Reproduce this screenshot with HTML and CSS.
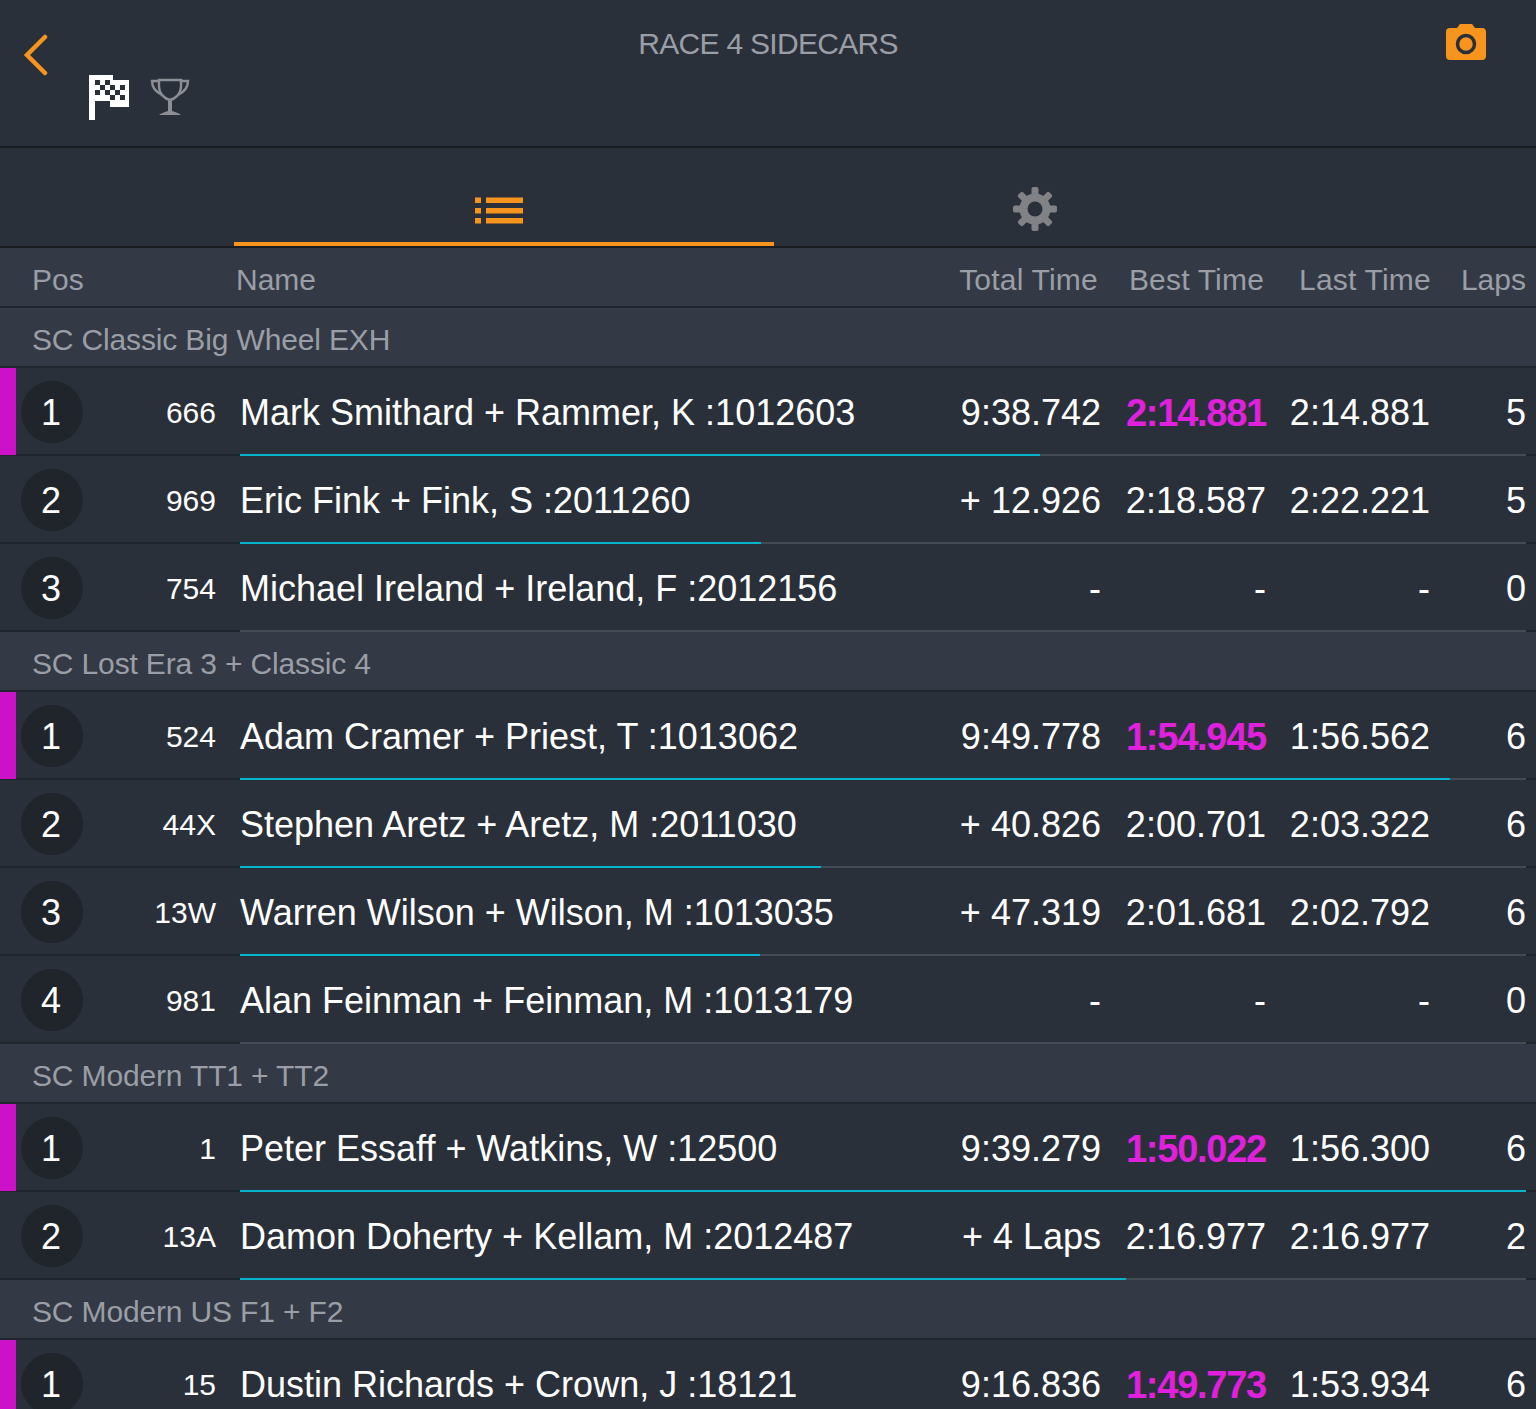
FILE: index.html
```html
<!DOCTYPE html>
<html lang="en">
<head>
    <meta charset="UTF-8">
    <meta name="viewport" content="width=device-width, initial-scale=1.0">
    <title>Race 4 Sidecars</title>
    <link rel="stylesheet" href="styles.css">
</head>
<body>
    <header class="top-bar">
        <svg class="back-icon" width="26" height="42" viewBox="0 0 26 42"><path d="M22 3 L4 21 L22 39" fill="none" stroke="#f7941d" stroke-width="4.5" stroke-linecap="round"/></svg>
        <div class="top-middle">
            <h1 class="race-title">RACE 4 SIDECARS</h1>
        </div>
        <svg class="camera-icon" width="40" height="36" viewBox="0 0 40 36"><path d="M4 4 H11 L14 0 H26 L29 4 H36 Q40 4 40 8 V32 Q40 36 36 36 H4 Q0 36 0 32 V8 Q0 4 4 4 Z" fill="#f7941d"/><circle cx="20" cy="20" r="8.5" fill="none" stroke="#2a303a" stroke-width="3.5"/></svg>
        <div class="race-icons">
            <svg width="41" height="45" viewBox="0 0 41 45">
                <path d="M0 0 H24 V5 H40 V32 H21 V26 H6 V45 H0 Z" fill="#fff"/>
                <g fill="#2a303a">
                    <rect x="6" y="5" width="5" height="5"/><rect x="16" y="5" width="5" height="5"/>
                    <rect x="11" y="10" width="5" height="5"/><rect x="21" y="10" width="5" height="5"/><rect x="31" y="10" width="5" height="5"/>
                    <rect x="6" y="15" width="5" height="5"/><rect x="16" y="15" width="5" height="5"/><rect x="26" y="15" width="5" height="5"/>
                    <rect x="21" y="20" width="5" height="5"/><rect x="31" y="20" width="5" height="5"/>
                </g>
            </svg>
            <svg width="40" height="38" viewBox="0 0 40 38">
                <g fill="none" stroke="#8b8f95" stroke-width="2.4">
                    <path d="M9 2 H31 V8 C31 16 25 21 20 22 C15 21 9 16 9 8 Z"/>
                    <path d="M9 3 H2 C2 10 6 14 12 17"/>
                    <path d="M31 3 H38 C38 10 34 14 28 17"/>
                </g>
                <path d="M18 22 H22 V33 C25 34 29 35 31 37 H9 C11 35 15 34 18 33 Z" fill="#8b8f95"/>
            </svg>
        </div>
    </header>

    <nav class="tabs">
        <div class="tab tab-active">
            <svg width="48" height="28" viewBox="0 0 48 28" fill="#f7941d">
                <rect x="0" y="0.5" width="6" height="5.5"/><rect x="11" y="0.5" width="37" height="5.5"/>
                <rect x="0" y="11" width="6" height="5.5"/><rect x="11" y="11" width="37" height="5.5"/>
                <rect x="0" y="21" width="6" height="5.5"/><rect x="11" y="21" width="37" height="5.5"/>
            </svg>
        </div>
        <div class="tab tab-gear">
            <svg width="44" height="44" viewBox="0 0 44 44">
                <g fill="#808285">
                    <rect x="18.5" y="0" width="7" height="44" rx="2"/>
                    <rect x="18.5" y="0" width="7" height="44" rx="2" transform="rotate(45 22 22)"/>
                    <rect x="18.5" y="0" width="7" height="44" rx="2" transform="rotate(90 22 22)"/>
                    <rect x="18.5" y="0" width="7" height="44" rx="2" transform="rotate(135 22 22)"/>
                    <circle cx="22" cy="22" r="15.5"/>
                </g>
                <circle cx="22" cy="22" r="7.5" fill="#2a303a"/>
            </svg>
        </div>
    </nav>

    <div class="head-row">
        <span class="head-pos">Pos</span>
        <span class="head-name">Name</span>
        <span class="head-total">Total Time</span>
        <span class="head-best">Best Time</span>
        <span class="head-last">Last Time</span>
        <span class="head-laps">Laps</span>
    </div>

    <div class="group-row">SC Classic Big Wheel EXH</div>

    <div class="row leader">
        <span class="accent"></span><span class="pos">1</span><span class="num">666</span>
        <span class="name">Mark Smithard + Rammer, K :1012603</span>
        <span class="time">9:38.742</span><span class="time best">2:14.881</span><span class="time">2:14.881</span><span class="time">5</span>
        <div class="track"><div class="fill" style="width: 62.2%"></div></div>
    </div>
    <div class="row">
        <span class="accent"></span><span class="pos">2</span><span class="num">969</span>
        <span class="name">Eric Fink + Fink, S :2011260</span>
        <span class="time">+ 12.926</span><span class="time">2:18.587</span><span class="time">2:22.221</span><span class="time">5</span>
        <div class="track"><div class="fill" style="width: 40.5%"></div></div>
    </div>
    <div class="row">
        <span class="accent"></span><span class="pos">3</span><span class="num">754</span>
        <span class="name">Michael Ireland + Ireland, F :2012156</span>
        <span class="time">-</span><span class="time">-</span><span class="time">-</span><span class="time">0</span>
        <div class="track"></div>
    </div>

    <div class="group-row">SC Lost Era 3 + Classic 4</div>

    <div class="row leader">
        <span class="accent"></span><span class="pos">1</span><span class="num">524</span>
        <span class="name">Adam Cramer + Priest, T :1013062</span>
        <span class="time">9:49.778</span><span class="time best">1:54.945</span><span class="time">1:56.562</span><span class="time">6</span>
        <div class="track"><div class="fill" style="width: 94.1%"></div></div>
    </div>
    <div class="row">
        <span class="accent"></span><span class="pos">2</span><span class="num">44X</span>
        <span class="name">Stephen Aretz + Aretz, M :2011030</span>
        <span class="time">+ 40.826</span><span class="time">2:00.701</span><span class="time">2:03.322</span><span class="time">6</span>
        <div class="track"><div class="fill" style="width: 45.2%"></div></div>
    </div>
    <div class="row">
        <span class="accent"></span><span class="pos">3</span><span class="num">13W</span>
        <span class="name">Warren Wilson + Wilson, M :1013035</span>
        <span class="time">+ 47.319</span><span class="time">2:01.681</span><span class="time">2:02.792</span><span class="time">6</span>
        <div class="track"><div class="fill" style="width: 40.4%"></div></div>
    </div>
    <div class="row">
        <span class="accent"></span><span class="pos">4</span><span class="num">981</span>
        <span class="name">Alan Feinman + Feinman, M :1013179</span>
        <span class="time">-</span><span class="time">-</span><span class="time">-</span><span class="time">0</span>
        <div class="track"></div>
    </div>

    <div class="group-row">SC Modern TT1 + TT2</div>

    <div class="row leader">
        <span class="accent"></span><span class="pos">1</span><span class="num">1</span>
        <span class="name">Peter Essaff + Watkins, W :12500</span>
        <span class="time">9:39.279</span><span class="time best">1:50.022</span><span class="time">1:56.300</span><span class="time">6</span>
        <div class="track"><div class="fill" style="width: 100%"></div></div>
    </div>
    <div class="row">
        <span class="accent"></span><span class="pos">2</span><span class="num">13A</span>
        <span class="name">Damon Doherty + Kellam, M :2012487</span>
        <span class="time">+ 4 Laps</span><span class="time">2:16.977</span><span class="time">2:16.977</span><span class="time">2</span>
        <div class="track"><div class="fill" style="width: 68.9%"></div></div>
    </div>

    <div class="group-row">SC Modern US F1 + F2</div>

    <div class="row leader">
        <span class="accent"></span><span class="pos">1</span><span class="num">15</span>
        <span class="name">Dustin Richards + Crown, J :18121</span>
        <span class="time">9:16.836</span><span class="time best">1:49.773</span><span class="time">1:53.934</span><span class="time">6</span>
        <div class="track"><div class="fill" style="width: 100%"></div></div>
    </div>
</body>
</html>
```
FILE: styles.css
```css
html, body {
    height: 100vh;
    overflow: hidden;
}
body {
    margin: 0;
    background-color: #2a303a;
    font-family: 'Liberation Sans', Arial, sans-serif;
    color: #fff;
}
.top-bar {
    height: 148px;
    box-sizing: border-box;
    border-bottom: 2px solid #1a1d22;
    display: grid;
    grid-template-columns: 1fr auto 1fr;
    grid-template-rows: 64px 1fr;
}
.back-icon {
    margin: 34px 0 0 23px;
}
.top-middle {
    padding-top: 26px;
}
.race-title {
    margin: 0;
    font-size: 30px;
    font-weight: normal;
    line-height: 36px;
    letter-spacing: -0.7px;
    color: #9a9ea6;
}
.camera-icon {
    justify-self: end;
    margin: 24px 50px 0 0;
}
.race-icons {
    grid-column: 1 / 4;
    padding: 11px 0 0 89px;
    display: flex;
    align-items: flex-start;
    gap: 20px;
}
.race-icons svg:last-child {
    margin-top: 3px;
}
.tabs {
    height: 100px;
    box-sizing: border-box;
    border-bottom: 2px solid #1a1d22;
    padding-left: 234px;
    display: flex;
}
.tab {
    width: 540px;
    height: 98px;
    box-sizing: border-box;
    display: flex;
    justify-content: center;
}
.tab-active {
    border-bottom: 4px solid #f7941d;
    padding: 49px 10px 0 0;
}
.tab-gear {
    padding: 39px 18px 0 0;
}
.head-row, .group-row {
    height: 60px;
    box-sizing: border-box;
    background-color: #333a45;
    border-bottom: 2px solid #20242c;
    font-size: 30px;
    line-height: 64px;
    color: #9a9ea6;
}
.head-row {
    display: flex;
}
.head-pos {
    width: 204px;
    padding-left: 32px;
}
.head-name {
    flex: 1;
}
.head-total {
    margin-right: 31px;
    letter-spacing: 0.2px;
}
.head-best {
    margin-right: 35px;
    letter-spacing: 0.2px;
}
.head-last {
    margin-right: 30px;
    letter-spacing: 0.2px;
}
.head-laps {
    margin-right: 10px;
}
.group-row {
    padding-left: 32px;
    letter-spacing: -0.15px;
}
.row {
    height: 88px;
    display: grid;
    grid-template-columns: 16px 67px 133px 24px 1fr 165px 165px 164px 96px 10px;
    grid-template-rows: 86px 2px;
    align-items: center;
    box-shadow: inset 0 -2px 0 #20242c;
}
.accent {
    grid-column: 1;
    grid-row: 1;
    align-self: stretch;
    margin-bottom: -1px;
}
.leader .accent {
    background-color: #cc12c8;
}
.pos {
    grid-column: 2;
    width: 60px;
    height: 62px;
    margin: 2px 0 0 5px;
    padding-right: 2px;
    border-radius: 50%;
    background-color: #20252b;
    font-size: 36px;
    line-height: 64px;
    text-align: center;
}
.num {
    grid-column: 3;
    padding-top: 4px;
    font-size: 30px;
    text-align: right;
}
.name {
    grid-column: 5;
    padding-top: 4px;
    font-size: 36px;
    white-space: nowrap;
}
.time {
    padding-top: 4px;
    font-size: 36px;
    text-align: right;
    white-space: nowrap;
}
.best {
    font-size: 38px;
    font-weight: bold;
    letter-spacing: -1.25px;
    color: #e020dc;
}
.track {
    grid-column: 5 / 10;
    grid-row: 2;
    height: 2px;
    background-color: #454b55;
}
.fill {
    height: 2px;
    background-color: #00b4cc;
}
```
